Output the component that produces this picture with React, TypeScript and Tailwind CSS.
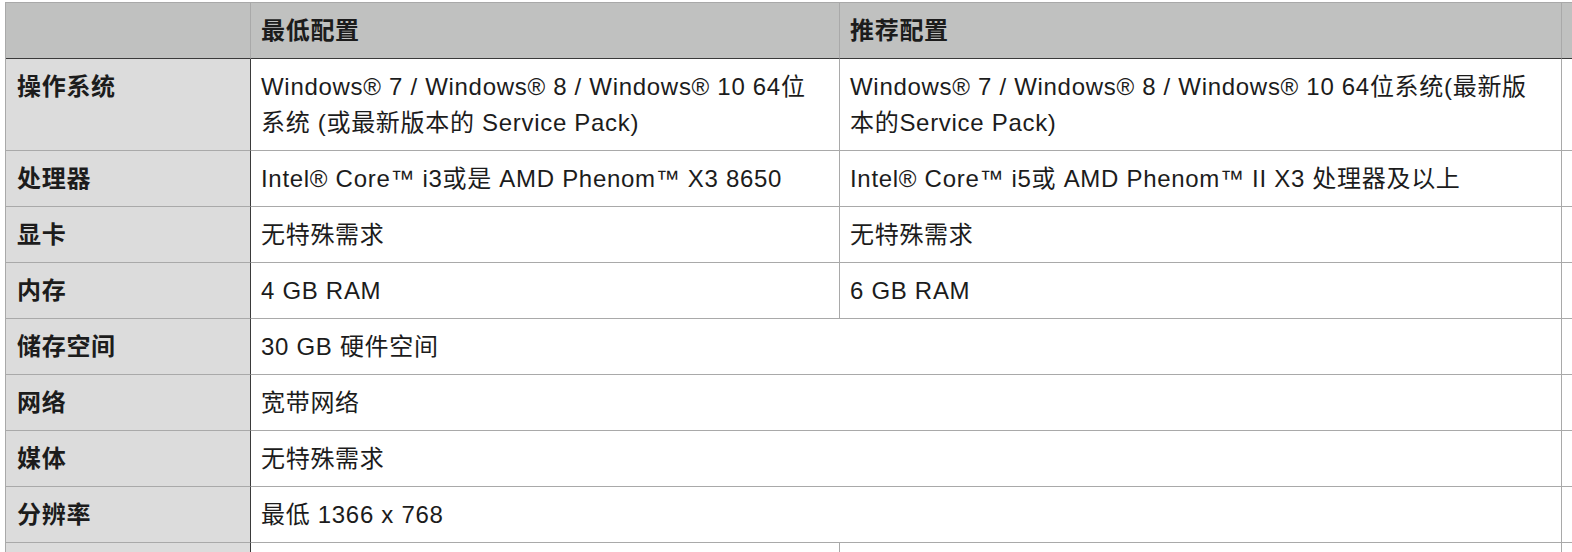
import React from "react";

const font = { fontFamily: '"Liberation Sans", "Noto Sans CJK SC", sans-serif' };

type Cell = { text: React.ReactNode; span?: number };
type Row = { label: string; cells: Cell[] };

const rows: Row[] = [
  {
    label: "操作系统",
    cells: [
      {
        text: (
          <>
            Windows® 7 / Windows® 8 / Windows® 10 64位
            <br />
            系统 (或最新版本的 Service Pack)
          </>
        ),
      },
      {
        text: (
          <>
            Windows® 7 / Windows® 8 / Windows® 10 64位系统(最新版
            <br />
            本的Service Pack)
          </>
        ),
      },
    ],
  },
  {
    label: "处理器",
    cells: [
      { text: "Intel® Core™ i3或是 AMD Phenom™ X3 8650" },
      { text: "Intel® Core™ i5或 AMD Phenom™ II X3 处理器及以上" },
    ],
  },
  { label: "显卡", cells: [{ text: "无特殊需求" }, { text: "无特殊需求" }] },
  { label: "内存", cells: [{ text: "4 GB RAM" }, { text: "6 GB RAM" }] },
  { label: "储存空间", cells: [{ text: "30 GB 硬件空间", span: 2 }] },
  { label: "网络", cells: [{ text: "宽带网络", span: 2 }] },
  { label: "媒体", cells: [{ text: "无特殊需求", span: 2 }] },
  { label: "分辨率", cells: [{ text: "最低 1366 x 768", span: 2 }] },
];

export default function App() {
  return (
    <div
      className="w-[1572px] h-[552px] overflow-hidden bg-white text-[#1c1c1c] text-[24px] leading-[36px] tracking-[0.7px]"
      style={font}
    >
      <div className="ml-[5px] mt-[2px] w-[1860px] border-t border-l border-[#a9a9a9] grid grid-cols-[245px_589px_722px_300px] whitespace-nowrap">
        {/* header */}
        <div className="bg-[#c0c1c0] border-r border-[#a9a9a9] border-b border-b-[#3a3a3a] pt-[10px] pb-[9px] px-[10px]" />
        <div className="bg-[#c0c1c0] border-r border-[#a9a9a9] border-b border-b-[#3a3a3a] pt-[10px] pb-[9px] px-[10px] font-bold">
          最低配置
        </div>
        <div className="bg-[#c0c1c0] border-r border-[#a9a9a9] border-b border-b-[#3a3a3a] pt-[10px] pb-[9px] px-[10px] font-bold">
          推荐配置
        </div>
        <div className="bg-[#c0c1c0] border-r border-[#a9a9a9] border-b border-b-[#3a3a3a] pt-[10px] pb-[9px] px-[10px]" />

        {rows.map((r) => (
          <React.Fragment key={r.label}>
            <div className="bg-[#dcdcdc] border-b border-[#a9a9a9] border-r border-r-[#3a3a3a] pt-[10px] pb-[9px] px-[11px] font-bold">
              {r.label}
            </div>
            {r.cells.map((c, i) => (
              <div
                key={i}
                className={
                  "border-r border-b border-[#a9a9a9] pt-[10px] pb-[9px] px-[10px] " +
                  (c.span === 2 ? "col-span-2" : "")
                }
              >
                {c.text}
              </div>
            ))}
            <div className="border-r border-b border-[#a9a9a9]" />
          </React.Fragment>
        ))}

        {/* partial last row */}
        <div className="bg-[#dcdcdc] border-b border-[#a9a9a9] border-r border-r-[#3a3a3a] h-[56px]" />
        <div className="border-r border-b border-[#a9a9a9] h-[56px]" />
        <div className="border-r border-b border-[#a9a9a9] h-[56px]" />
        <div className="border-r border-b border-[#a9a9a9] h-[56px]" />
      </div>
    </div>
  );
}
